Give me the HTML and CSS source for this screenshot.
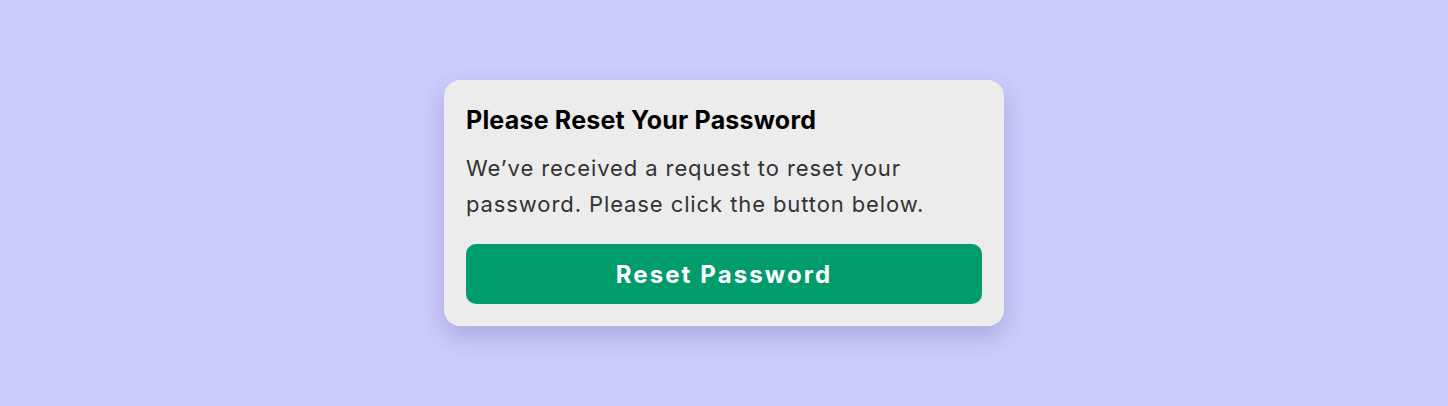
FILE: index.html
```html
<!DOCTYPE html>
<html lang="en">
<head>
    <meta charset="UTF-8">
    <meta name="viewport" content="width=device-width, initial-scale=1.0">
    <title>Reset Password</title>
    <link rel="stylesheet" href="styles.css">
</head>
<body>
    <div class="page">
        <div class="card">
            <h2 class="card-title">Please Reset Your Password</h2>
            <p class="card-text">We’ve received a request to reset your password. Please click the button below.</p>
            <button type="button" class="reset-button">Reset Password</button>
        </div>
    </div>
</body>
</html>
```

FILE: styles.css
```css
body {
    font-family: Inter, "Noto Sans", sans-serif;
    background-color: #cbcbfe;
    margin: 0;
    padding: 0;
}

.page {
    height: 406px;
    display: flex;
    align-items: center;
    justify-content: center;
}

.card {
    width: 560px;
    box-sizing: border-box;
    padding: 22px;
    background-color: #ececec;
    border-radius: 16px;
    box-shadow: 0 10px 25px rgba(50, 50, 110, 0.22);
}

.card-title {
    margin: 0 0 12px 0;
    font-size: 25px;
    line-height: 36px;
    font-weight: 700;
    letter-spacing: 0.2px;
    color: #000;
}

.card-text {
    margin: 0 0 22px 0;
    font-size: 22px;
    line-height: 36px;
    letter-spacing: 0.9px;
    color: #333;
}

.reset-button {
    display: block;
    width: 100%;
    height: 60px;
    padding: 0;
    background-color: #009c6c;
    color: #fff;
    border: none;
    border-radius: 10px;
    font-family: Inter, "Noto Sans", sans-serif;
    font-size: 24px;
    font-weight: 700;
    letter-spacing: 2.1px;
    cursor: pointer;
}
```
